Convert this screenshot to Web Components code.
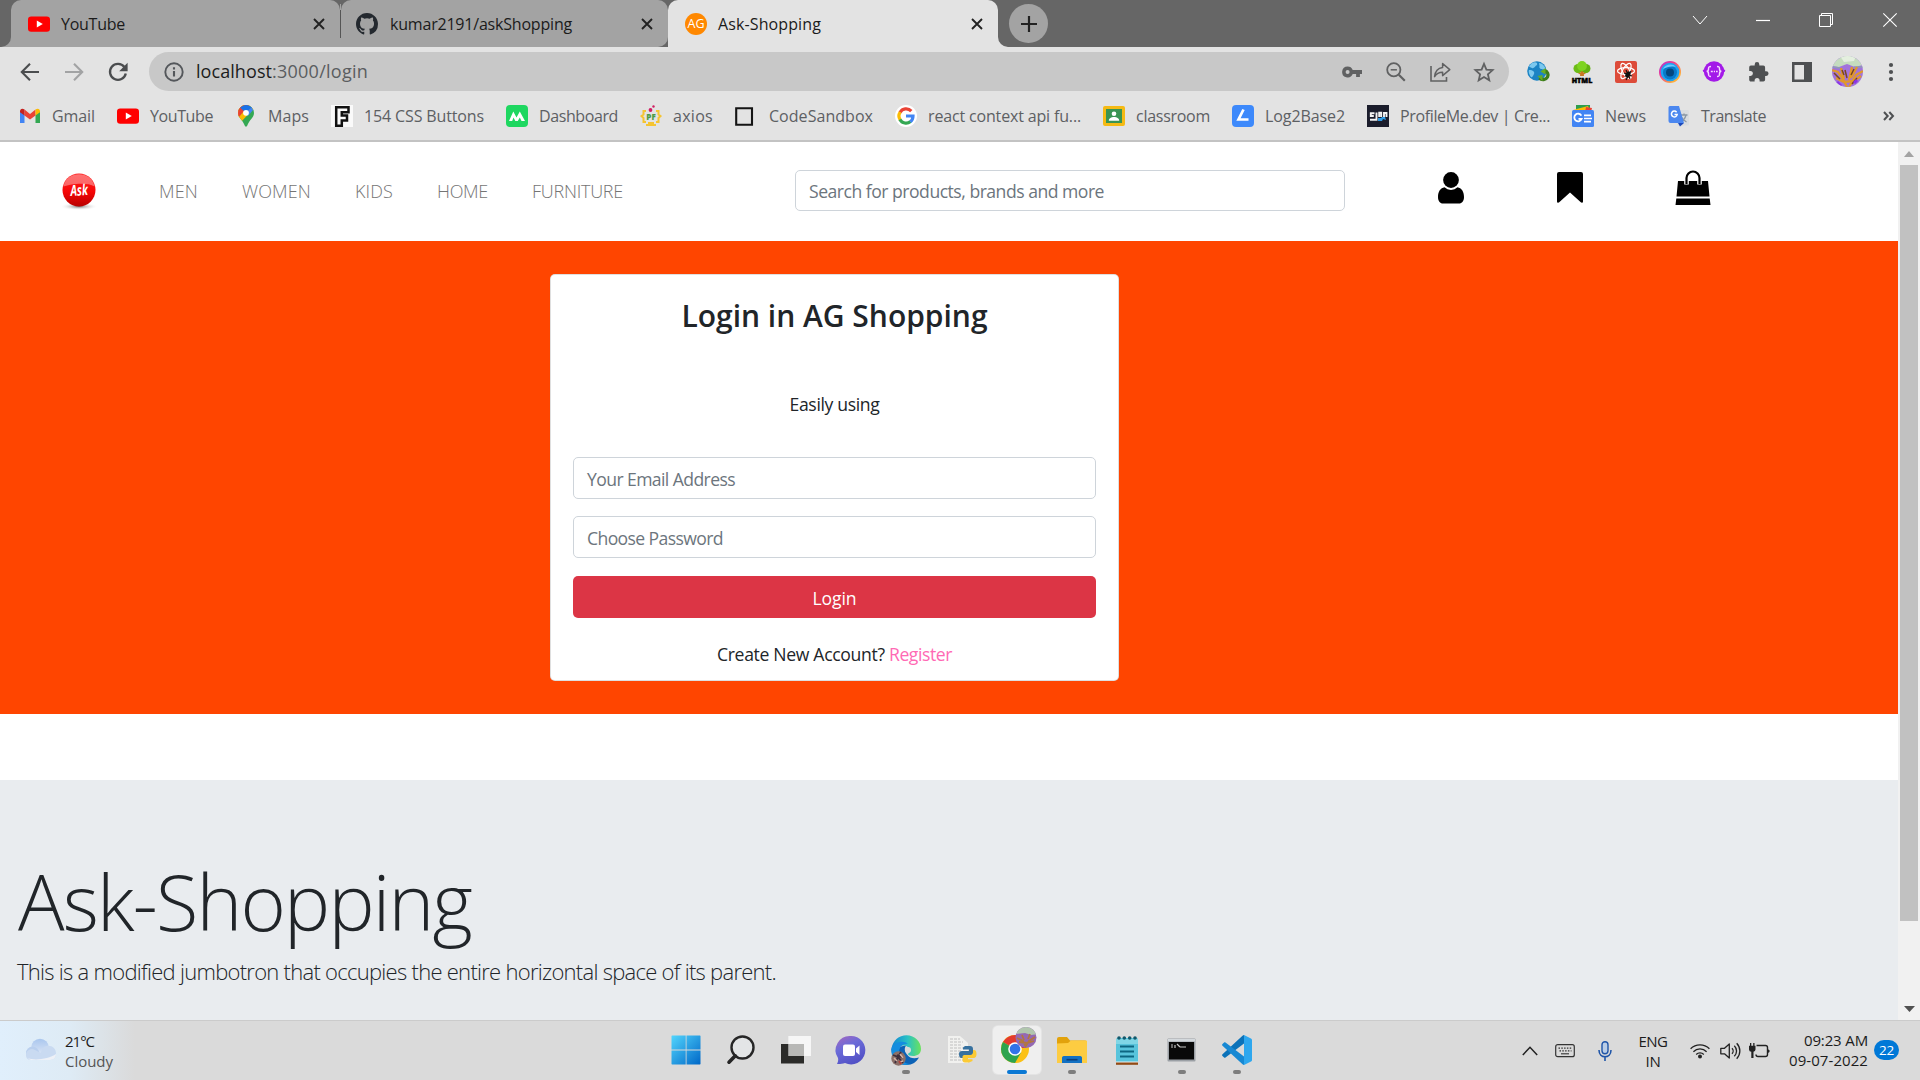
<!DOCTYPE html>
<html lang="en">
<head>
<meta charset="utf-8">
<title>Ask-Shopping</title>
<style>
html,body{margin:0;padding:0;width:1920px;height:1080px;overflow:hidden;background:#fff;font-family:"Open Sans","Noto Sans",sans-serif}
</style>
</head>
<body>
<desktop-screen></desktop-screen>
<script>
const FONT = '"Open Sans","Noto Sans",sans-serif';
const ICONS = {
youtube:[22,22,'<rect y="3.4" width="22" height="15.4" rx="3.2" fill="#f00"/><path d="M8.8 7.6v7l6-3.5z" fill="#fff"/>'],
github:[22,22,'<path fill="#24292f" transform="scale(1.375)" d="M8 0C3.58 0 0 3.58 0 8c0 3.54 2.29 6.53 5.47 7.59.4.07.55-.17.55-.38 0-.19-.01-.82-.01-1.49-2.01.37-2.53-.49-2.69-.94-.09-.23-.48-.94-.82-1.13-.28-.15-.68-.52-.01-.53.63-.01 1.08.58 1.23.82.72 1.21 1.87.87 2.33.66.07-.52.28-.87.51-1.07-1.78-.2-3.64-.89-3.64-3.95 0-.87.31-1.59.82-2.15-.08-.2-.36-1.02.08-2.12 0 0 .67-.21 2.2.82a7.6 7.6 0 0 1 4 0c1.53-1.04 2.2-.82 2.2-.82.44 1.1.16 1.92.08 2.12.51.56.82 1.27.82 2.15 0 3.07-1.87 3.75-3.65 3.95.29.25.54.73.54 1.48 0 1.07-.01 1.93-.01 2.2 0 .21.15.46.55.38A8.01 8.01 0 0 0 16 8c0-4.42-3.58-8-8-8z"/>'],
close:[12,12,'<path d="M1 1l10 10M11 1L1 11" stroke="#222" stroke-width="1.9"/>'],
plus:[18,18,'<path d="M9 1v16M1 9h16" stroke="#222" stroke-width="2.2"/>'],
winDown:[16,10,'<path d="M1 1l7 8 7-8" fill="none" stroke="#fff"/>'],
winMin:[14,14,'<path d="M0 7.5h14" stroke="#fff" stroke-width="1.2"/>'],
winMax:[14,14,'<path d="M.5 2.5h11v11H.5zM2.5 2.5v-2h11v11h-2" fill="none" stroke="#fff"/>'],
winX:[14,14,'<path d="M.3 .3l13.4 13.4M13.7.3L.3 13.7" stroke="#fff" stroke-width="1.1"/>'],
back:[20,20,'<path d="M19 10H2M10 1.8L1.8 10l8.2 8.2" fill="none" stroke="#4b4d4f" stroke-width="2.1"/>'],
fwd:[20,20,'<path d="M1 10h17M10 1.8l8.2 8.2-8.2 8.2" fill="none" stroke="#a2a3a4" stroke-width="2.1"/>'],
reload:[20,20,'<path d="M16.4 5A8 8 0 1 0 17.8 11.5" fill="none" stroke="#4b4d4f" stroke-width="2.3"/><path d="M19.6 .8v8.4h-8.4z" fill="#4b4d4f"/>'],
info:[20,20,'<circle cx="10" cy="10" r="8.7" fill="none" stroke="#54575b" stroke-width="1.9"/><path d="M10 9v5.6M10 5.2v2.3" stroke="#54575b" stroke-width="2.1"/>'],
key:[20,12,'<path fill="#606162" fill-rule="evenodd" d="M5.6.5a5.5 5.5 0 1 0 5.1 7.6h3.4V11h3.8V8.1H20V3.9h-9.3A5.5 5.5 0 0 0 5.6.5zm0 3.5a2 2 0 1 1 0 4 2 2 0 0 1 0-4z"/>'],
zoomout:[20,20,'<circle cx="7.8" cy="7.8" r="6.6" fill="none" stroke="#606162" stroke-width="1.8"/><path d="M12.8 12.8l6 6" stroke="#606162" stroke-width="2.2"/><path d="M4.7 7.8h6.2" stroke="#606162" stroke-width="1.5"/>'],
share:[21,20,'<path d="M1 4v15h15.5v-4" fill="none" stroke="#606162" stroke-width="1.6"/><path d="M12.6 1.6l7.2 6-7.2 6v-3.4c-3.8 0-6.2 1.3-8 4.4.5-4.7 3-8.4 8-9.1z" fill="none" stroke="#606162" stroke-width="1.5" stroke-linejoin="round"/>'],
star:[20,20,'<path d="M10 1.8l2.4 5.8 6.2.5-4.7 4.1 1.4 6.1L10 15l-5.3 3.3 1.4-6.1L1.4 8.1l6.2-.5z" fill="none" stroke="#606162" stroke-width="1.8"/>'],
globe:[22,22,'<circle cx="9.9" cy="10" r="9.7" fill="#1b83c4"/><path d="M5 2c4-1.600 6 0 5 2-2 1-3 4-5 3S2 6 2 5zM2 9c4 0 6 2 5 4s-2 4-3 3-3-5-2-7zM12 2c3 0 6 3 6.500 6-3 1-7 0-6-3z" fill="#7cc8ee"/><path d="M12.500 17a5 5 0 0 0 8-1 4.200 4.200 0 0 0-3-6.200" fill="none" stroke="#3d7d1c" stroke-width="3.400"/><path d="M18.5 7v6.500l-5-3z" fill="#65ad25"/><path d="M10.500 15l5-1v6z" fill="#65ad25"/>'],
tree:[22,22,'<path d="M9.500 10h3l.5 5H9z" fill="#c87823"/><path d="M5 10l5 3M17 10l-5 3" stroke="#c87823" stroke-width="1.500"/><circle cx="7" cy="7.500" r="4.500" fill="#6cbc16"/><circle cx="15" cy="7.500" r="4.500" fill="#62b012"/><circle cx="11" cy="5" r="4.900" fill="#7ed321"/>','<text x=".7" y="21.500" font-family="Open Sans" font-size="7.600" font-weight="800" textLength="20.600" lengthAdjust="spacingAndGlyphs" stroke="#000" stroke-width=".5">HTML</text>'],
react:[22,22,'<rect width="22" height="22" rx="2" fill="#dd4b39"/><g fill="none" stroke="#fff" stroke-width="1.200"><ellipse cx="11" cy="10" rx="8.500" ry="3.400"/><ellipse cx="11" cy="10" rx="8.500" ry="3.400" transform="rotate(60 11 10)"/><ellipse cx="11" cy="10" rx="8.500" ry="3.400" transform="rotate(120 11 10)"/></g><ellipse cx="13.200" cy="13.500" rx="2.200" ry="3.400" transform="rotate(35 13 13)" fill="#111"/><path d="M9 12l8 3M11 9l4 9M16 10l-5 9" stroke="#111" stroke-width="1.100"/>'],
eye:[22,22,'<defs><linearGradient id="e" x1="0" x2="1" y1="0" y2="1"><stop stop-color="#a238e0"/><stop offset=".35" stop-color="#f0388f"/><stop offset=".8" stop-color="#ffb13b"/></linearGradient></defs><circle cx="11" cy="11" r="11" fill="url(#e)"/><circle cx="11" cy="11" r="9.300" fill="#1ca3f2"/><circle cx="11" cy="11.500" r="7" fill="#0879c8"/><circle cx="11" cy="11.500" r="4" fill="#03477f"/><path d="M4 8c2-5 10-6 13-2-5-1-9 0-13 2z" fill="#6dc8ff"/>'],
braces:[22,22,'<circle cx="11" cy="10.500" r="10.200" fill="#a31ae8"/><path d="M0 10l3-1M22 10l-3-1" stroke="#a31ae8" stroke-width="2"/><path d="M8 5.500c-2.500 0-2.500.8-2.500 2.500s-.5 2.300-1.900 2.300c1.400 0 1.900.7 1.900 2.500s0 2.700 2.500 2.700M14 5.500c2.500 0 2.500.8 2.500 2.500s.5 2.300 1.900 2.300c-1.400 0-1.900.7-1.900 2.500s0 2.700-2.500 2.700" fill="none" stroke="#f5d7ff" stroke-width="1.500"/><path d="M7.800 10.500h2M10.800 10.500h1.200M13 10.500h1.700" stroke="#f5d7ff" stroke-width="1.700"/>'],
puzzle:[20,20,'<path fill="#4e5052" d="M17.200 9.200h-1.100V5.500A1.800 1.800 0 0 0 14.300 3.600h-4V2.400a2.300 2.300 0 0 0-4.600 0v1.200H1.900A1.700 1.700 0 0 0 .2 5.400v3.600h1.200a2.500 2.500 0 0 1 0 5H.2v3.700c0 1 .8 1.800 1.800 1.800h3.600v-1.100a2.500 2.500 0 0 1 5 0v1.100h3.700a1.800 1.800 0 0 0 1.800-1.800v-3.800h1.100a2.350 2.350 0 0 0 0-4.700z"/>'],
side:[20,20,'<path fill="#4e5052" fill-rule="evenodd" d="M0 0h20v20H0zM2.500 3v14.500H12V3z"/>'],
avatar:[31,31,'<clipPath id="a"><circle cx="15.500" cy="15.500" r="15.500"/></clipPath><g clip-path="url(#a)"><rect width="31" height="31" fill="#a272dc"/><path d="M0 0h31v9l-8 2-8-3-8 3-7-1z" fill="#c5dcbf"/><path d="M8 0h16l-2 5-10 1z" fill="#e4efdf"/><path d="M0 11l8 1M22 11h9" stroke="#8f9bb5" stroke-width="1.500"/><path d="M0 14l6 2 5 7 4 8M31 15l-7 4-7 12M9 12l3 11M20 11l-3 13M4 22l8 4 10-1 7-5M25 11l-6 11" stroke="#e0982b" stroke-width="2.300" fill="none"/><path d="M2 17l6 6M13 14l2 8M25 22l-5 6M22 13l-3 6M10 14l2 5" stroke="#7a471f" stroke-width="1.500"/><path d="M5 26l4 4M22 27l3-3" stroke="#8b35e6" stroke-width="3"/></g>'],
dots:[6,20,'<g fill="#4e5052"><circle cx="3" cy="3" r="2.100"/><circle cx="3" cy="10" r="2.100"/><circle cx="3" cy="17" r="2.100"/></g>'],
gmail:[22,22,'<path d="M1 6v12h4.500V9.500z" fill="#4285f4"/><path d="M16.500 9.500V18H21V6z" fill="#34a853"/><path d="M5.500 4.500v6L11 14.500l5.500-4v-6L11 9z" fill="#ea4335"/><path d="M1 6.500c0-3 2.500-3.500 4.500-2v6L1 7.200z" fill="#c5221f"/><path d="M21 6.500c0-3-2.500-3.500-4.500-2v6L21 7.200z" fill="#fbbc04"/>'],
maps:[22,22,'<clipPath id="m"><path d="M11 0a8 8 0 0 0-8 8c0 4.500 4 6 6.500 12 .7 2.300 2.300 2.300 3 0C15 14 19 12.500 19 8a8 8 0 0 0-8-8z"/></clipPath><g clip-path="url(#m)"><rect width="22" height="22" fill="#34a853"/><path d="M0 0h22L5 18 0 12z" fill="#fbbc04"/><path d="M0 0h14L4 12l-4 0z" fill="#ea4335"/><path d="M5 2.500L11 8l6.500-6L11-1z" fill="#1a73e8"/><path d="M11 8l6-6 1 3-5 6z" fill="#4285f4"/></g><circle cx="11" cy="7.800" r="2.900" fill="#fff"/>'],
ficon:[22,22,'<path fill="#fafafa" d="M0 0h22v22H0z"/><path d="M5.200 20.800V2.300h12.300v5h-6.700v3.200h5.200v5h-5.200v5.300z" fill="none" stroke="#111" stroke-width="2.500"/>'],
dash:[22,22,'<rect width="22" height="22" rx="4" fill="#1ed760"/><path d="M3 16L7.300 6.500l3.200 6 3.300-6L19 16h-3.500l-1.700-3.500-2 3.500H9.300L7.500 12.500 6.200 16z" fill="#fff"/>'],
axios:[22,22,'<path d="M6 6H3.500v3.500L1.500 11l2 2v4H6M16 6h2.500v3.500l2 1.500-2 2v4H16M6 20h10M9 20v-2h4v2" fill="none" stroke="#f5c431" stroke-width="2"/><text x="6.300" y="15.200" font-family="Open Sans" font-weight="800" font-size="8" textLength="9.500" fill="#4d9b45">PF</text><circle cx="10.500" cy="5" r="1.900" fill="#d11f63"/><circle cx="13.500" cy="1.500" r="1.200" fill="#d11f63"/>'],
csb:[22,22,'<path d="M1.200 3.200h15.800v16.500H1.200z" fill="none" stroke="#151515" stroke-width="2.100"/>'],
google:[22,22,'<circle cx="11" cy="11" r="11" fill="#fff"/><g fill="none" stroke-width="3.200"><path d="M16.300 6.200A7 7 0 0 0 5 7.500" stroke="#ea4335"/><path d="M5.200 7.100a7 7 0 0 0 0 7.800" stroke="#fbbc05"/><path d="M4.900 14.400a7 7 0 0 0 10.600 2.100" stroke="#34a853"/><path d="M11 11h7c0 2.600-1 4.500-2.700 5.700" stroke="#4285f4"/></g>'],
classroom:[22,22,'<rect y="1" width="22" height="20" rx="2" fill="#f5ba14"/><rect x="3" y="4" width="16" height="14" fill="#3a9453"/><circle cx="11" cy="8.700" r="2.300" fill="#fff"/><path d="M5.800 15.800c0-5 10.400-5 10.400 0z" fill="#fff"/>'],
log:[22,22,'<rect width="22" height="22" rx="4" fill="#3d89fb"/><path d="M11.500 4.500L6.500 14.500h10" fill="none" stroke="#fff" stroke-width="2.700"/>'],
profile:[22,22,'<path d="M0 0h22v22H0z" fill="#1b1d2c"/><path d="M7.500 8.300H3.800v2.700h3M9.500 7.500v7.200H3M12.200 12V7.800h2V12M17 12V8h2.500v4" fill="none" stroke="#f4f4f4" stroke-width="1.900"/><path d="M11 13h3l1-1h3l1 3-3-1-1 2h-4z" fill="#2f9ce6"/>'],
news:[22,22,'<path d="M4 0h14v5H4z" fill="#2e9f4d"/><path d="M1 5l15-4 2 5H2z" fill="#fbbc04"/><path d="M14 2l6 1-1 4h-6z" fill="#ea4335"/><rect y="5" width="22" height="17" rx="1.500" fill="#4285f4"/><path d="M9.400 10.600a3.800 3.800 0 1 0 .3 3.200H6.500" fill="none" stroke="#fff" stroke-width="1.800"/><path d="M12 10.300h7M12 13.500h8M12 16.700h7" stroke="#fff" stroke-width="1.700"/>'],
translate:[22,22,'<rect x="9" y="5" width="12" height="15.500" rx="1.500" fill="#d9dcdf"/><path d="M12.500 10h7M16 8.500v2M18 10c-1 4-3 6-6 7M13.500 12c1 3 3 4 5 5" stroke="#8a97a4" stroke-width="1.300" fill="none"/><path d="M10 18h6l-4 3.500z" fill="#1b49ba"/><path d="M2 1h9l5 17H2.500A2 2 0 0 1 .5 16V2.500A1.500 1.500 0 0 1 2 1z" fill="#4b87ef"/><path d="M8.600 7.200a2.900 2.900 0 1 0 .6 2.300H6.500" fill="none" stroke="#fff" stroke-width="1.500"/>'],
more:[12,10,'<path d="M1 1l3.700 4L1 9M6.300 1L10 5 6.300 9" fill="none" stroke="#4e5052" stroke-width="2"/>'],
ask:[38,38,'<defs><radialGradient id="s"><stop stop-color="#777"/><stop offset="1" stop-color="#fff" stop-opacity="0"/></radialGradient><linearGradient id="r" x2="0" y2="1"><stop stop-color="#f22"/><stop offset=".55" stop-color="#f60606"/><stop offset="1" stop-color="#b80000"/></linearGradient></defs><ellipse cx="19" cy="33.500" rx="19" ry="3.800" fill="url(#s)"/><circle cx="19" cy="17" r="16.500" fill="url(#r)"/><path d="M3.500 13.500C6-3 32-3 34.500 13.500 27 9 11 11 3.500 13.500z" fill="#fff" opacity=".36"/><text x="10.500" y="22.500" transform="rotate(-4 19 19)" font-family="Open Sans" font-style="italic" font-weight="700" font-size="15" textLength="17.500" lengthAdjust="spacingAndGlyphs" fill="#fff">Ask</text>'],
user:[26,32,'<path d="M6.500 15.300C2.500 16 0 19.500 0 25c0 4 2 6.500 5 6.500h16c3 0 5-2.500 5-6.500 0-5.500-2.500-9-6.500-9.700a9.300 9.300 0 0 1-13 0z"/><circle cx="13" cy="8" r="7.900"/>'],
bookmark:[26,32,'<path d="M2 0h22a2 2 0 0 1 2 2v27.500c0 1.200-1.300 1.600-2.200.8L13 20.500 2.200 30.300C1.300 31.100 0 30.700 0 29.500V2a2 2 0 0 1 2-2z"/>'],
bag:[36,36,'<path d="M3 11h30l1.500 15.500h-33zM1.300 28.500h33.400L35.500 35H.5z"/><path d="M11.500 14.500V8.500a6.500 6.500 0 0 1 13 0v6" fill="none" stroke="#fff" stroke-width="4.600"/><path d="M11.500 14V8a6.500 6.500 0 0 1 13 0v6" fill="none" stroke="#000" stroke-width="2.200"/>'],
cloud:[32,24,'<defs><linearGradient id="c" x2="0" y2="1"><stop stop-color="#a9c6ee"/><stop offset="1" stop-color="#dfe8f6"/></linearGradient></defs><circle cx="15" cy="9.500" r="8.800" fill="url(#c)"/><circle cx="7.500" cy="15" r="6.500" fill="#b9cfee"/><path d="M1 17.500a6 6 0 0 1 9-5.500l6 3c1-11 16-9 15 1.500-.3 4-3 5.500-6 5.500H6.500C3 22 1 20 1 17.500z" fill="#c9daf1"/><path d="M6 22h19c4 0 6-3 6-6-7 5-22 7-28 4 1 1.300 2 2 3 2z" fill="#eef1f7"/>'],
win:[30,30,'<defs><linearGradient id="w" x2="1" y2="1"><stop stop-color="#52d5fd"/><stop offset="1" stop-color="#0067c7"/></linearGradient></defs><path fill="url(#w)" d="M1 .5h13.700v14H.5V1zM15.500.5H29l.5.5v13.500h-14zM.5 15.500h14.200v14H1L.5 29zM15.500 15.500h14V29l-.5.5H15.500z"/>'],
search:[28,30,'<circle cx="15.500" cy="12.500" r="11" fill="#e3e5e6" stroke="#262626" stroke-width="2.400"/><path d="M8.300 20.800L2 27.200" stroke="#262626" stroke-width="3.600" stroke-linecap="round"/>'],
task:[30,30,'<path d="M0 9h23v19.500H0z" fill="#2b2b29"/><path d="M7.500 1h22.500v20H7.500z" fill="#fff" opacity=".72"/><path d="M7.500 9H23v12H7.500z" fill="#b8b8b6"/><path d="M23 1h7v20h-7zM7.500 1H30v8H7.500z" fill="#f6f6f6" opacity=".8"/>'],
chat:[30,30,'<defs><linearGradient id="h" x1=".1" x2=".6" y2="1"><stop stop-color="#a368c0"/><stop offset=".4" stop-color="#6b6bd8"/><stop offset="1" stop-color="#5150c5"/></linearGradient></defs><path d="M15 1a14.200 14.200 0 1 1-6 27c-3 1-6 1.300-8 1 1-2 1.500-4 1-6A14.200 14.200 0 0 1 15 1z" fill="url(#h)"/><rect x="7" y="9.500" width="12" height="11.500" rx="2" fill="#fff"/><path d="M20 13.500l3.500-3v9.500L20 17z" fill="#fff"/>'],
edge:[30,31,'<defs><linearGradient id="g" x2="1"><stop stop-color="#1083d6"/><stop offset=".55" stop-color="#2ac2c4"/><stop offset="1" stop-color="#6be25c"/></linearGradient></defs><path d="M.3 14C1 25 8 30 15.500 30c6 0 10-3 12.500-7.500-5 1.500-9 1-12-3C13 16 13 12 16 10z" fill="#0c62b6"/><path d="M.4 14C2 5 8 .3 15.500.3 24 .3 30 7 30 14c0 5-4 7-8 7-3 0-5-1-5-2 1-1 1.800-2 1.800-3.500 0-3-3-5-6.800-5-6 0-11 3-11.600 3.500z" fill="url(#g)"/><path d="M.5 13C4 6 13 5 17 9c-6-1-9 4-9 9 0 7 6 11 11 11C8 33-1 24 .5 13z" fill="#148ddf"/><circle cx="17" cy="15" r="3" fill="#dadada"/><circle cx="7.500" cy="23.500" r="7.200" fill="#8b7069"/><path d="M2 20l5 2 3-5M4 28l3-6 5 6M6 20l6 3" stroke="#3e2f3d" stroke-width="1.800" fill="none"/><path d="M3 23l3 3M9 19l3 4M8 27l4-1" stroke="#d5b3a6" stroke-width="1.500"/><path d="M8 26l2 3" stroke="#b3403b" stroke-width="2"/>'],
python:[30,30,'<path d="M2 1h12l8 7v20H2z" fill="#f1f1ef"/><path d="M4 4h10M4 7h13M4 10h12M4 13h13M4 16h11M4 19h12M4 22h12M4 25h14" stroke="#c0c0c0" stroke-width="1.200" stroke-dasharray="3 1"/><path d="M19 11h5c2 0 3 1 3 3v4c0 2-1 2.500-3 2.500h-4c-2 0-3 1-3 2.500h-1.500c-2 0-2.500-2-2.500-4s1-3 3-3h7v-1.500h-6V12.500z" fill="#37719f"/><path d="M23 27.500h-4c-2 0-2.500-1-2.500-2.500v-3c0-1.500 1-2 2.500-2h5c2 0 3-1 3-3v-2h1.200c1.500 0 2.300 1.500 2.300 4s-1 4-2.800 4H22v1.200h4.500V26z" fill="#fbca35"/>'],
chrome:[40,40,'<circle cx="16" cy="23" r="14" fill="#fbc116"/><path d="M16 23L3.900 16a14 14 0 0 1 24.200 0z" fill="#e33b2e"/><path d="M3.900 16A14 14 0 0 0 16 37l6-10.500-6-3.500z" fill="#2da44e"/><path d="M16 16.500h12.500L27 22h-4z" fill="#e33b2e"/><circle cx="16" cy="23" r="6.800" fill="#fff"/><circle cx="16" cy="23" r="5.300" fill="#3273e9"/><clipPath id="k"><circle cx="27" cy="11.500" r="10.500"/></clipPath><g clip-path="url(#k)"><rect x="16" width="24" height="24" fill="#9469b4"/><path d="M16 0h24v8l-8 1-6-2-10 1z" fill="#b1c6ae"/><path d="M18 12l6 3 3 6M36 11l-6 4-4 6M23 9l2 5M31 8l-2 5M20 16l8 1 7-2" stroke="#b2773f" stroke-width="1.800" fill="none"/></g>'],
folder:[30,30,'<path d="M0 4a2 2 0 0 1 2-2h8l3 3.500h15A2 2 0 0 1 30 7v6H0z" fill="#e2a20c"/><path d="M0 8.500L11 8l3-2.500h15a1 1 0 0 1 1 1V28H0z" fill="#fdcc42"/><path d="M5 28v-5.500A1.800 1.800 0 0 1 6.800 21h16.400a1.800 1.800 0 0 1 1.800 1.500V28z" fill="#1371c3"/><path d="M9.500 24.700h11" stroke="#0b3f7a" stroke-width="1.600"/>'],
notepad:[24,31,'<rect x="1" y="3" width="22" height="25" rx="1.500" fill="#58c4dc"/><path d="M1 4h22v5H1z" fill="#80d6e6"/><path d="M5 11.500h14M5 16.500h14M5 21.500h14" stroke="#0d6681" stroke-width="1.800"/><g fill="#12586b"><circle cx="4" cy="3" r="1.800"/><circle cx="9.300" cy="3" r="1.800"/><circle cx="14.700" cy="3" r="1.800"/><circle cx="20" cy="3" r="1.800"/></g><path d="M1 27h22v2.800H1z" fill="#914a14"/><path d="M1 26.500h22v1H1z" fill="#e9eef0"/>'],
cmd:[29,24,'<rect x=".5" y=".5" width="28" height="23" rx="1" fill="#9ba0a5"/><path d="M1 1h27v2.500H1z" fill="#d3d8dc"/><path d="M2 4h25v17.500H2z" fill="#090909"/><path d="M4 7h2M4 9h2M8 7v3M10 6l3 3M13 9h6" stroke="#c5c5c5" stroke-width="1.200"/>'],
vscode:[30,30,'<path d="M22 0l7 3.500c.7.400 1 .8 1 1.500v20c0 .8-.4 1.200-1 1.500L22 30z" fill="#2ea7ee"/><path d="M22 0v8.500L3.500 22.500c-.5.400-1 .4-1.400 0L.5 21c-.6-.6-.6-1.200 0-1.800L20.500.8C21 .3 21.500 0 22 0z" fill="#0b72b9"/><path d="M22 30v-8.500L3.500 7.500c-.5-.4-1-.4-1.400 0L.5 9c-.6.600-.6 1.200 0 1.800l20 18.400c.5.500 1 .8 1.500.8z" fill="#1788d3"/>'],
up:[16,10,'<path d="M.8 9L8 1.300 15.200 9" fill="none" stroke="#222" stroke-width="1.500"/>'],
kbd:[20,14,'<rect x=".7" y=".7" width="18.600" height="12" rx="2" fill="none" stroke="#333" stroke-width="1.200"/><path d="M3.500 4.200h13M4.500 6.800h12" stroke="#333" stroke-width="1.300" stroke-dasharray="1.500 1.300"/><path d="M6 9.800h8" stroke="#333" stroke-width="1.100"/>'],
mic:[14,20,'<rect x="4" y=".7" width="6" height="12" rx="3" fill="#b9cde6" stroke="#1f55a8" stroke-width="1.400"/><path d="M1 9c0 9 12 9 12 0M7 15.500V20" fill="none" stroke="#1f55a8" stroke-width="1.600"/>'],
wifi:[20,16,'<g fill="none" stroke="#222" stroke-width="1.300"><path d="M.6 5.800a13.300 13.300 0 0 1 18.800 0M3.400 8.700a9.300 9.300 0 0 1 13.200 0M6.200 11.500a5.300 5.300 0 0 1 7.600 0"/></g><circle cx="10" cy="13.500" r="2" fill="#222"/>'],
vol:[20,18,'<path d="M.8 6.300h3.700L9.300 2v14L4.500 11.800H.8zM12 6.300c1.500 1.500 1.500 4 0 5.500M14.300 3.800c3 3 3 7.500 0 10.500M16.700 1.300c4.200 4.500 4.200 11 0 15.500" fill="none" stroke="#222" stroke-width="1.300" stroke-linejoin="round"/>'],
bat:[21,16,'<path d="M7.500 2.500h9a2 2 0 0 1 2 2v7a2 2 0 0 1-2 2H9a2 2 0 0 1-2-2" fill="none" stroke="#222" stroke-width="1.400"/><path d="M18.500 6l2 1.300v1.600l-2 1.300zM0 2.800h1V0h1.300v2.800h1.900V0h1.300v2.800h1v3.700a2.500 2.500 0 0 1-2 2.300V15H2.300V8.800A2.500 2.500 0 0 1 0 6.500z" fill="#222"/>'],
arrUp:[10,6,'<path d="M5 0l5 6H0z" fill="#a3a3a3"/>'],
arrDn:[11,6,'<path d="M0 0h11L5.500 6z" fill="#505050"/>'],
footL:[10,10,'<path d="M10 0v10H0A10 10 0 0 0 10 0z" fill="var(--foot)"/>'],
footR:[10,10,'<path d="M0 0v10h10A10 10 0 0 1 0 0z" fill="var(--foot)"/>']
};

class Base extends HTMLElement {
  constructor(){ super(); this.attachShadow({mode:'open'}); }
  connectedCallback(){ this.shadowRoot.innerHTML = this.render(); }
}

/* One line of text whose tracking is tuned so its advance equals the "w" attribute. */
class UiText extends Base {
  render(){
    const size = +(this.getAttribute('size')||16), weight = this.getAttribute('weight')||400;
    const w = +this.getAttribute('w'), text = this.textContent;
    UiText.ctx ??= document.createElement('canvas').getContext('2d');
    UiText.ctx.font = `${weight} ${size}px ${FONT}`;
    const n = UiText.ctx.measureText(text).width;
    const ls = w ? (w - n)/text.length : 0;
    return `<style>:host{display:block;flex:none;white-space:pre;font-family:${FONT};font-size:${size}px;font-weight:${weight};line-height:${Math.round(size*1.25)}px;letter-spacing:${ls.toFixed(3)}px;${w?`width:${w}px;`:''}}</style><slot></slot>`;
  }
}
class UiIcon extends Base {
  render(){
    const [w,h,body,label=''] = ICONS[this.getAttribute('name')];
    return `<style>:host{display:block;flex:none;width:${w}px;height:${h}px}svg{display:block;overflow:visible}</style><svg width="${w}" height="${h}" viewBox="0 0 ${w} ${h}">${body}${label}</svg>`;
  }
}
class BrowserTab extends Base {
  render(){
    const w=this.getAttribute('width'), on=this.hasAttribute('active');
    return `<style>:host{display:flex;flex:none;align-items:center;box-sizing:border-box;width:${w}px;height:47px;padding:0 15px 0 17px;border-radius:10px 10px 0 0;background:${on?'#e3e3e3':'#a3a3a3'};color:#1b1b1b;--foot:${on?'#e3e3e3':'#a3a3a3'};position:relative}
    ::slotted(ui-text){margin-left:11px}.sp{flex:1}.l,.r{position:absolute;bottom:0}.l{left:-10px}.r{right:-10px}</style>
    ${on?'<ui-icon class="r" name="footR"></ui-icon>':''}${this.hasAttribute('first')?'<ui-icon class="l" name="footL"></ui-icon>':''}<slot name="icon"></slot><slot></slot><span class="sp"></span><ui-icon name="close"></ui-icon>`;
  }
}
class TabStrip extends Base {
  render(){ return `<style>:host{display:flex;align-items:center;height:47px;background:#666;padding-left:11px;overflow:hidden}
    .sep{display:flex;align-items:center;width:1px;height:47px;background:linear-gradient(#666 0 4px,#a3a3a3 4px 10px,#555 10px 38px,#a3a3a3 38px)}.ag{display:flex;align-items:center;justify-content:center;width:22px;height:22px;border-radius:50%;background:#ff8800;color:#fff}
    .new{display:flex;align-items:center;justify-content:center;width:39px;height:39px;border-radius:50%;background:#a3a3a3;margin-left:11px}
    .second{border-radius:10px 10px 10px 0}.seat{display:flex;background:linear-gradient(90deg,#666 50%,#e3e3e3 50%)}.third{margin:0}.win{display:flex;align-items:center;margin-left:auto;padding:0 23px 7px 0}</style>
    <browser-tab first width="329"><ui-icon slot="icon" name="youtube"></ui-icon><ui-text w="64">YouTube</ui-text></browser-tab>
    <span class="sep"></span>
    <browser-tab class="second" width="327" style="padding-left:15px"><ui-icon slot="icon" name="github"></ui-icon><ui-text w="182" style="margin-left:12px">kumar2191/askShopping</ui-text></browser-tab>
    <browser-tab active class="third" width="330"><span class="ag" slot="icon"><ui-text size="12.5" w="17">AG</ui-text></span><ui-text w="103">Ask-Shopping</ui-text></browser-tab>
    <span class="new"><ui-icon name="plus"></ui-icon></span>
    <span class="win"><ui-icon name="winDown"></ui-icon><ui-icon name="winMin" style="margin-left:48px"></ui-icon><ui-icon name="winMax" style="margin-left:49px"></ui-icon><ui-icon name="winX" style="margin-left:50px"></ui-icon></span>`; }
}
class AddressBar extends Base {
  render(){
    const ext=[['globe',18],['tree',22],['react',22],['eye',22],['braces',22],['puzzle',24],['side',23],['avatar',20],['dots',25]];
    return `<style>:host{display:flex;align-items:center;height:49px;padding:0 17px 0 20px;box-sizing:border-box}
    .pill{display:flex;align-items:center;box-sizing:border-box;width:1360px;height:39px;border-radius:20px;background:#c8c8c8;margin-left:21px;padding:0 15px 0 15px}
    .host{color:#1c1c1c;margin-left:12px}.path{color:#5a5d60}.sp{flex:1}</style>
    <ui-icon name="back"></ui-icon><ui-icon name="fwd" style="margin-left:24px"></ui-icon><ui-icon name="reload" style="margin-left:24px"></ui-icon>
    <div class="pill"><ui-icon name="info"></ui-icon><ui-text class="host" size="18" w="76">localhost</ui-text><ui-text class="path" size="18" w="96">:3000/login</ui-text><span class="sp"></span>
    <ui-icon name="key"></ui-icon><ui-icon name="zoomout" style="margin-left:24px"></ui-icon><ui-icon name="share" style="margin-left:24px"></ui-icon><ui-icon name="star" style="margin-left:23px"></ui-icon></div>
    ${ext.map(([n,m])=>`<ui-icon name="${n}" style="margin-left:${m}px"></ui-icon>`).join('')}`; }
}
class BookmarkBar extends Base {
  render(){
    const items=[['gmail','Gmail',43],['youtube','YouTube',63],['maps','Maps',41],['ficon','154 CSS Buttons',120],['dash','Dashboard',79],['axios','axios',40],['csb','CodeSandbox',105],['google','react context api fu...',153],['classroom','classroom',74],['log','Log2Base2',80],['profile','ProfileMe.dev | Cre...',150],['news','News',41],['translate','Translate',65]];
    return `<style>:host{display:flex;align-items:center;gap:22px;height:39px;padding:0 25px 3px 19px;box-sizing:border-box;color:#5d6063}
    .b{display:flex;align-items:center;gap:11px}.m{margin-left:auto}.x{margin-right:1px;margin-left:-1px}</style>
    ${items.map(([i,t,w])=>`<span class="b"><ui-icon name="${i}"></ui-icon><ui-text w="${i==='csb'?w-1:w}" ${i==='csb'?'style="margin-left:1px"':''}>${t}</ui-text></span>`).join('')}<ui-icon class="m" name="more"></ui-icon>`; }
}
class BrowserChrome extends Base {
  render(){ return `<style>:host{display:flex;flex-direction:column;height:142px;box-sizing:border-box;background:#e3e3e3;border-bottom:2px solid #c3c3c3}bookmark-bar{margin-top:2px}</style><tab-strip></tab-strip><address-bar></address-bar><bookmark-bar></bookmark-bar>`; }
}
class ShopNav extends Base {
  render(){ return `<style>:host{display:flex;align-items:flex-start;height:99px;box-sizing:border-box;background:#fff;padding:28px 0 0 60px;color:#747474}
    .links{display:flex;gap:44px;margin-left:61px;padding-top:10px}.search{display:flex;align-items:center;box-sizing:border-box;width:550px;height:41px;border:1px solid #ced4da;border-radius:5px;padding:1px 0 0 13px;color:#6c757d;margin-left:172px}
    .ic{display:flex;align-items:flex-start}</style>
    <ui-icon name="ask" style="margin-top:3px"></ui-icon>
    <div class="links"><ui-text size="18" weight="300" w="39">MEN</ui-text><ui-text size="18" weight="300" w="69">WOMEN</ui-text><ui-text size="18" weight="300" w="38">KIDS</ui-text><ui-text size="18" weight="300" w="51">HOME</ui-text><ui-text size="18" weight="300" w="91">FURNITURE</ui-text></div>
    <div class="search"><ui-text size="17.6" w="295">Search for products, brands and more</ui-text></div>
    <div class="ic"><ui-icon name="user" style="margin:2px 0 0 93px"></ui-icon><ui-icon name="bookmark" style="margin:2px 0 0 93px"></ui-icon><ui-icon name="bag" style="margin-left:92px"></ui-icon></div>`; }
}
class FormField extends Base {
  render(){ return `<style>:host{display:flex;align-items:center;box-sizing:border-box;height:42px;border:1px solid #ced4da;border-radius:5px;padding:2px 0 0 13px;color:#6c757d;background:#fff}</style><slot></slot>`; }
}
class LoginCard extends Base {
  render(){ return `<style>:host{display:flex;flex-direction:column;box-sizing:border-box;width:569px;height:407px;padding:22px 22px 0;background:#fff;border:1px solid rgba(0,0,0,.125);border-radius:5px;color:#212529}
    .t{align-self:center}.e{align-self:center;margin-top:58px}.btn{display:flex;align-items:center;justify-content:center;box-sizing:border-box;height:42px;padding-top:1px;border-radius:5px;background:#dc3545;color:#fff;margin-top:18px}
    .c{display:flex;align-self:center;margin-top:25px}.c a{color:#ff69b4}form-field+form-field{margin-top:17px}</style>
    <ui-text class="t" size="30" weight="600" w="306">Login in AG Shopping</ui-text>
    <ui-text class="e" size="17.6" w="90">Easily using</ui-text>
    <form-field style="margin-top:42px"><ui-text size="17.6" w="148">Your Email Address</ui-text></form-field>
    <form-field><ui-text size="17.6" w="136">Choose Password</ui-text></form-field>
    <div class="btn"><ui-text size="17.6" w="44">Login</ui-text></div>
    <div class="c"><ui-text size="17.6" w="172">Create New Account? </ui-text><a><ui-text size="17.6" w="63">Register</ui-text></a></div>`; }
}
class ShopJumbotron extends Base {
  render(){ return `<style>:host{display:block;height:240px;box-sizing:border-box;background:#e9ecef;color:#212529;padding:73px 0 0 17px}.l{margin-top:7px}</style>
    <ui-text size="77.5" weight="300" w="453" style="margin-left:1px">Ask-Shopping</ui-text><ui-text class="l" size="22" weight="300" w="759">This is a modified jumbotron that occupies the entire horizontal space of its parent.</ui-text>`; }
}
class ScrollRail extends Base {
  render(){ return `<style>:host{display:flex;flex-direction:column;align-items:center;width:22px;height:878px;box-sizing:border-box;background:#f1f1f1;padding:9px 0 8px}.t{width:18px;height:756px;background:#c1c1c1;margin-top:8px}.d{margin-top:auto}</style>
    <ui-icon name="arrUp"></ui-icon><div class="t"></div><ui-icon class="d" name="arrDn"></ui-icon>`; }
}
class ShopPage extends Base {
  render(){ return `<style>:host{display:flex;height:878px}.p{flex:1}.hero{display:flex;box-sizing:border-box;height:473px;padding:33px 0 0 550px;background:#ff4500}shop-jumbotron{margin-top:66px}</style>
    <div class="p"><shop-nav></shop-nav><div class="hero"><login-card></login-card></div><shop-jumbotron></shop-jumbotron></div><scroll-rail></scroll-rail>`; }
}
class TaskApp extends Base {
  render(){ const s=this.getAttribute('state'); return `<style>:host{display:flex;flex-direction:column;align-items:center;justify-content:center;position:relative;flex:none;width:48px;height:48px;border-radius:5px;${s==='on'?'background:#efefef;box-shadow:0 0 0 1px #e4e4e4;':''}}
    i{position:absolute;bottom:0;height:4px;border-radius:2px;width:${s==='on'?20:8}px;background:${s==='on'?'#0a78d4':'#7d7d7d'}}</style><slot></slot>${s?'<i></i>':''}`; }
}
class TaskBar extends Base {
  render(){
    const apps=[['win'],['search'],['task'],['chat'],['edge','run'],['python'],['chrome','on'],['folder','run'],['notepad'],['cmd','run'],['vscode','run']];
    return `<style>:host{display:flex;align-items:flex-start;height:60px;box-sizing:border-box;border-top:1px solid #cbcbcb;background:linear-gradient(90deg,#e0effc 0,#deebf5 70px,#dadada 135px);color:#1c1c1c}
    .w{display:flex;align-items:flex-start;width:662px;box-sizing:border-box;padding:11px 0 0 25px}.w ui-icon{margin-top:6px}.w div{margin-left:8px}.s{color:#555}
    .apps{display:flex;gap:7.1px;padding-top:5px}.tray{display:flex;align-items:flex-start;margin-left:auto;width:402px;height:59px}
    .tray>ui-icon{align-self:center}.lang{display:flex;flex-direction:column;align-items:center;width:30px;margin:11px 0 0 26px}.clock{display:flex;flex-direction:column;align-items:flex-end;width:79px;margin:10px 0 0 19px}
    .n{display:flex;align-items:center;justify-content:center;width:25px;height:20px;border-radius:10px;background:#0078d7;color:#fff;margin:19px 0 0 6px}</style>
    <div class="w"><ui-icon name="cloud"></ui-icon><div><ui-text size="15" w="29">21°C</ui-text><ui-text class="s" size="15" w="48" style="margin-top:1px">Cloudy</ui-text></div></div>
    <div class="apps">${apps.map(([n,s])=>`<task-app ${s?`state="${s}"`:''}><ui-icon name="${n}" ${n==='chrome'?'style="margin:-8px 0 0 5px"':''}></ui-icon></task-app>`).join('')}</div>
    <div class="tray"><ui-icon name="up" style="margin-left:4px"></ui-icon><ui-icon name="kbd" style="margin-left:17px"></ui-icon><ui-icon name="mic" style="margin-left:23px"></ui-icon>
    <div class="lang"><ui-text size="15" w="29">ENG</ui-text><ui-text size="15" w="15" style="margin-top:1px">IN</ui-text></div>
    <ui-icon name="wifi" style="margin-left:22px"></ui-icon><ui-icon name="vol" style="margin-left:10px"></ui-icon><ui-icon name="bat" style="margin-left:9px"></ui-icon>
    <div class="clock"><ui-text size="15" w="64">09:23 AM</ui-text><ui-text size="15" w="79" style="margin-top:1px">09-07-2022</ui-text></div><div class="n"><ui-text size="13.5" w="15">22</ui-text></div></div>`; }
}
class DesktopScreen extends Base {
  render(){ return `<style>:host{display:flex;flex-direction:column;width:1920px;height:1080px}</style><browser-chrome></browser-chrome><shop-page></shop-page><task-bar></task-bar>`; }
}
for (const [n,c] of Object.entries({'ui-text':UiText,'ui-icon':UiIcon,'browser-tab':BrowserTab,'tab-strip':TabStrip,'address-bar':AddressBar,'bookmark-bar':BookmarkBar,'browser-chrome':BrowserChrome,'shop-nav':ShopNav,'form-field':FormField,'login-card':LoginCard,'shop-jumbotron':ShopJumbotron,'scroll-rail':ScrollRail,'shop-page':ShopPage,'task-app':TaskApp,'task-bar':TaskBar,'desktop-screen':DesktopScreen})) customElements.define(n,c);
</script>
</body>
</html>
